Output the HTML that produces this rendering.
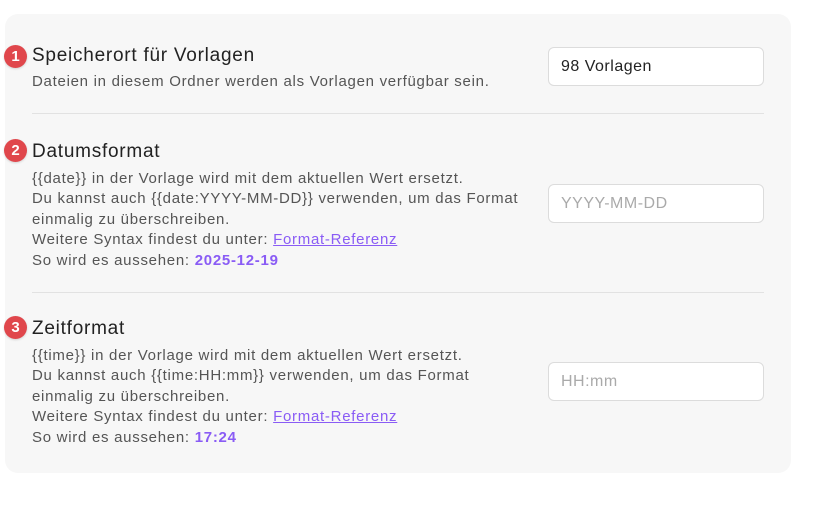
<!DOCTYPE html>
<html><head><meta charset="utf-8"><style>
body{margin:0;width:820px;height:521px;background:#fff;font-family:"Liberation Sans",sans-serif;position:relative;overflow:hidden}
.card{position:absolute;left:5px;top:14px;width:786px;height:459px;background:#f7f7f7;border-radius:13px}
.b{position:absolute;width:23px;height:23px;border-radius:50%;background:#e0474c;color:#fff;font-weight:bold;font-size:15px;text-align:center;line-height:23px;box-shadow:0 1px 2px rgba(0,0,0,.15)}
.t{position:absolute;left:32px;font-size:19px;letter-spacing:.75px;color:#222;white-space:nowrap}
.d{position:absolute;left:32px;font-size:15px;letter-spacing:.72px;color:#555;line-height:20.4px;white-space:nowrap}
.d a{color:#8a5cf5;text-decoration:underline}
.d b{color:#8a5cf5}
.hr{position:absolute;left:32px;width:732px;height:1px;background:#e2e2e2}
.in{position:absolute;left:548px;border:1px solid #dcdcdc;border-radius:6px;background:#fff;font-size:16px;letter-spacing:.5px;line-height:37px;padding-left:12px;box-sizing:border-box;width:216px;height:39px}
</style></head><body>
<div class="card"></div>
<div class="b" style="left:4px;top:45px">1</div>
<div class="t" style="top:45px">Speicherort für Vorlagen</div>
<div class="d" style="top:72px">Dateien in diesem Ordner werden als Vorlagen verfügbar sein.</div>
<div class="in" style="top:47px;color:#222">98 Vorlagen</div>
<div class="hr" style="top:113px"></div>

<div class="b" style="left:4px;top:139px">2</div>
<div class="t" style="top:141px">Datumsformat</div>
<div class="d" style="top:169px">{{date}} in der Vorlage wird mit dem aktuellen Wert ersetzt.<br>Du kannst auch {{date:YYYY-MM-DD}} verwenden, um das Format<br>einmalig zu überschreiben.<br>Weitere Syntax findest du unter: <a>Format-Referenz</a><br>So wird es aussehen: <b>2025-12-19</b></div>
<div class="in" style="top:184px;color:#aaa">YYYY-MM-DD</div>
<div class="hr" style="top:292px"></div>

<div class="b" style="left:4px;top:316px">3</div>
<div class="t" style="top:318px">Zeitformat</div>
<div class="d" style="top:346px">{{time}} in der Vorlage wird mit dem aktuellen Wert ersetzt.<br>Du kannst auch {{time:HH:mm}} verwenden, um das Format<br>einmalig zu überschreiben.<br>Weitere Syntax findest du unter: <a>Format-Referenz</a><br>So wird es aussehen: <b>17:24</b></div>
<div class="in" style="top:362px;color:#aaa">HH:mm</div>
</body></html>
